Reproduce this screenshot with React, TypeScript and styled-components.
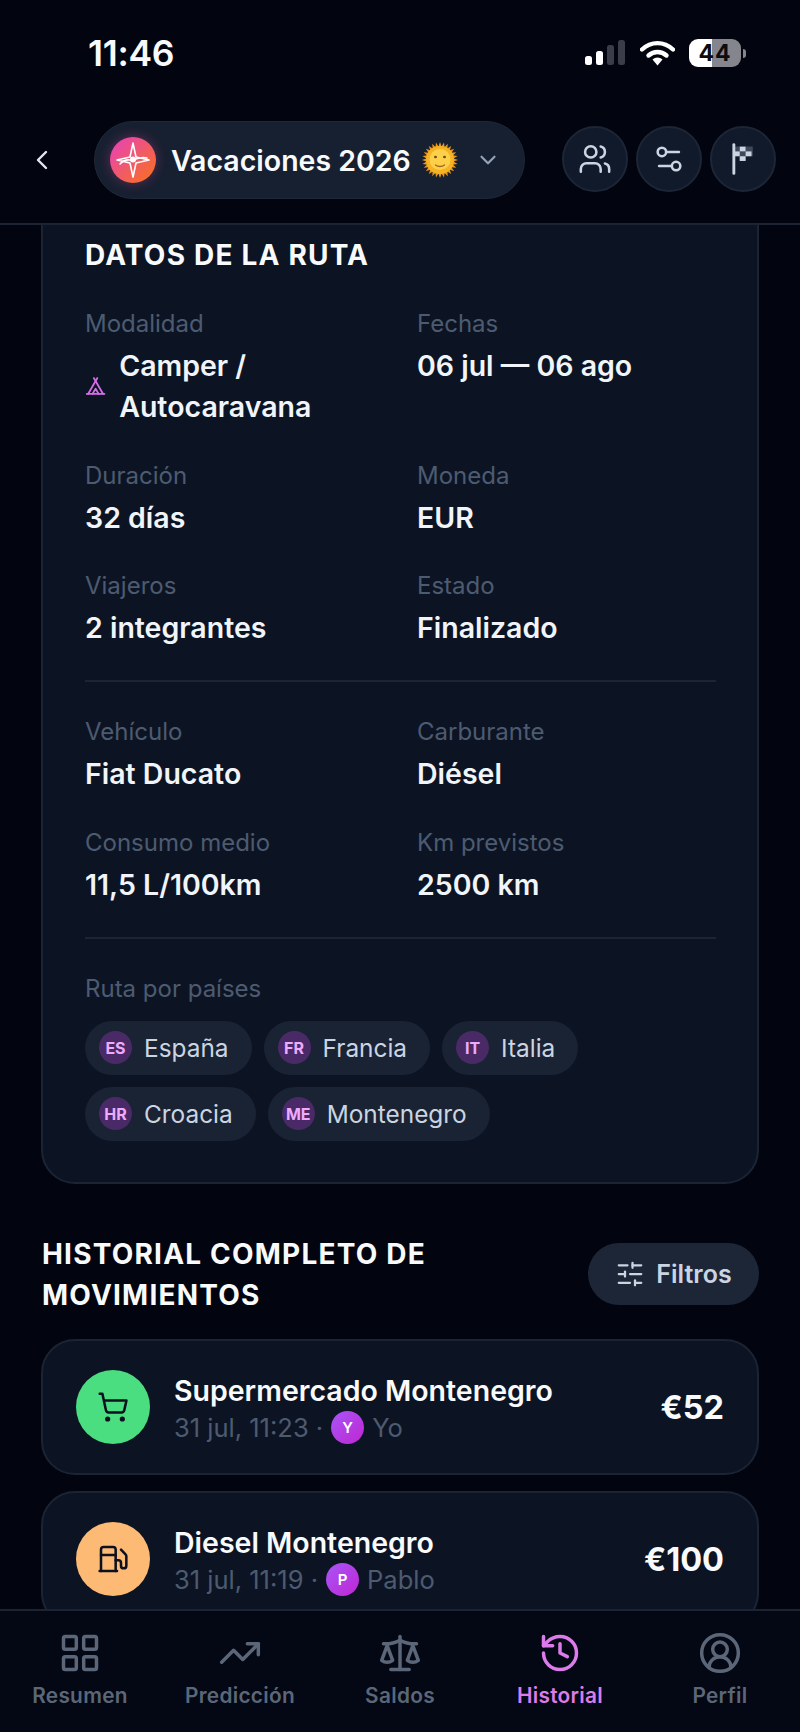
import styled, { createGlobalStyle } from "styled-components";
import {
	ChevronDown,
	ChevronLeft,
	CircleUserRound,
	Fuel,
	History,
	LayoutGrid,
	Scale,
	Settings2,
	ShoppingCart,
	SlidersHorizontal,
	Tent,
	TrendingUp,
	Users,
} from "lucide-react";

const GlobalStyle = createGlobalStyle`
	html, body {
		margin: 0;
		padding: 0;
		background: #02040f;
	}
	* {
		box-sizing: border-box;
	}
`;

const routeRows = [
	{ label: "Duración", value: "32 días" },
	{ label: "Moneda", value: "EUR" },
	{ label: "Viajeros", value: "2 integrantes" },
	{ label: "Estado", value: "Finalizado" },
];

const vehicleRows = [
	{ label: "Vehículo", value: "Fiat Ducato" },
	{ label: "Carburante", value: "Diésel" },
	{ label: "Consumo medio", value: "11,5 L/100km" },
	{ label: "Km previstos", value: "2500 km" },
];

const countries = [
	{ code: "ES", name: "España" },
	{ code: "FR", name: "Francia" },
	{ code: "IT", name: "Italia" },
	{ code: "HR", name: "Croacia" },
	{ code: "ME", name: "Montenegro" },
];

const navItems = [
	{ label: "Resumen", Icon: LayoutGrid },
	{ label: "Predicción", Icon: TrendingUp },
	{ label: "Saldos", Icon: Scale },
	{ label: "Historial", Icon: History, active: true },
	{ label: "Perfil", Icon: CircleUserRound },
];

const SignalIcon = () => (
	<svg width="41" height="26" viewBox="0 0 41 26">
		<rect x="0" y="16" width="7" height="9" rx="2.5" fill="#fff" />
		<rect x="11" y="11" width="7" height="14" rx="2.5" fill="#fff" />
		<rect x="22" y="5" width="7" height="20" rx="2.5" fill="#3b3d48" />
		<rect x="33" y="0" width="7" height="25" rx="2.5" fill="#3b3d48" />
	</svg>
);

const WifiIcon = () => (
	<svg width="35" height="26" viewBox="0 0 35 26" fill="none">
		<path d="M2 9.5C11 1 24 1 33 9.5" stroke="#fff" strokeWidth="4.4" strokeLinecap="round" />
		<path d="M8.5 15.5C13.8 10.8 21.2 10.8 26.5 15.5" stroke="#fff" strokeWidth="4.4" strokeLinecap="round" />
		<path d="M12.5 19.6C15.4 16.9 19.6 16.9 22.5 19.6L17.5 25.4Z" fill="#fff" />
	</svg>
);

const TripLogo = () => (
	<svg width="46" height="46" viewBox="0 0 46 46" fill="none">
		<path d="M23 6L26 20L39 23L26 26L23 40L20 26L7 23L20 20Z" stroke="#fff" strokeWidth="1.6" strokeLinejoin="round" />
		<path d="M10 27C16 20 20 24 23 23C27 22 31 19 37 21" stroke="#fff" strokeWidth="1.6" strokeLinecap="round" />
		<circle cx="23" cy="22.5" r="3" fill="#fff" />
	</svg>
);

const SunIcon = () => {
	const rays = Array.from({ length: 28 }, (_, i) => (i * 360) / 28);
	return (
		<svg width="36" height="36" viewBox="0 0 36 36">
			{rays.map((deg) => (
				<path key={deg} d="M16.2 5L18 0L19.8 5Z" fill="#e8951a" transform={`rotate(${deg} 18 18)`} />
			))}
			<circle cx="18" cy="18" r="14" fill="#f5b324" />
			<circle cx="18" cy="17.5" r="10.5" fill="#fdd04a" />
			<ellipse cx="13.5" cy="15" rx="1.5" ry="1.3" fill="#6d4c20" />
			<ellipse cx="22.5" cy="15" rx="1.5" ry="1.3" fill="#6d4c20" />
			<path d="M13.5 23C16 25 20 25 22.5 23" stroke="#a8651e" strokeWidth="1.3" fill="none" strokeLinecap="round" />
		</svg>
	);
};

const CheckerFlag = () => (
	<svg width="32" height="34" viewBox="0 0 24 26" fill="none">
		<path d="M5 2V24" stroke="#cbd5e1" strokeWidth="2.2" strokeLinecap="round" />
		<path d="M5 3.5H9.5V7.2H14V3.5H19.5V10.9H14V14.5H9.5V10.9H5Z" fill="#cbd5e1" opacity="0.25" />
		<rect x="9.5" y="3.5" width="4.5" height="3.7" fill="#cbd5e1" />
		<rect x="14" y="7.2" width="4.5" height="3.7" fill="#cbd5e1" />
		<rect x="9.5" y="10.9" width="4.5" height="3.6" fill="#cbd5e1" />
		<rect x="5" y="7.2" width="4.5" height="3.7" fill="#cbd5e1" />
	</svg>
);

const App = () => {
	return (
		<Phone>
			<GlobalStyle />
			<StatusBar>
				<Clock>11:46</Clock>
				<StatusIcons>
					<SignalIcon />
					<WifiIcon />
					<Battery>
						<BatteryBody>44</BatteryBody>
						<BatteryCap />
					</Battery>
				</StatusIcons>
			</StatusBar>

			<Header>
				<BackButton>
					<ChevronLeft size={32} strokeWidth={1.8} />
				</BackButton>
				<TripPill>
					<LogoBadge>
						<TripLogo />
					</LogoBadge>
					<TripName>Vacaciones 2026</TripName>
					<SunIcon />
					<PillChevron>
						<ChevronDown size={26} strokeWidth={2} />
					</PillChevron>
				</TripPill>
				<HeaderActions>
					<RoundButton>
						<Users size={34} strokeWidth={1.8} />
					</RoundButton>
					<RoundButton>
						<Settings2 size={34} strokeWidth={1.8} />
					</RoundButton>
					<RoundButton>
						<CheckerFlag />
					</RoundButton>
				</HeaderActions>
			</Header>

			<Scroll>
				<RouteCard>
					<CardTitle>DATOS DE LA RUTA</CardTitle>
					<DataGrid>
						<div>
							<FieldLabel>Modalidad</FieldLabel>
							<ModeValue>
								<Tent size={26} strokeWidth={2} color="#d56ee6" />
								<FieldValue>Camper / Autocaravana</FieldValue>
							</ModeValue>
						</div>
						<div>
							<FieldLabel>Fechas</FieldLabel>
							<FieldValue>06 jul — 06 ago</FieldValue>
						</div>
						{routeRows.map((field) => (
							<div key={field.label}>
								<FieldLabel>{field.label}</FieldLabel>
								<FieldValue>{field.value}</FieldValue>
							</div>
						))}
					</DataGrid>
					<Divider />
					<DataGrid>
						{vehicleRows.map((field) => (
							<div key={field.label}>
								<FieldLabel>{field.label}</FieldLabel>
								<FieldValue>{field.value}</FieldValue>
							</div>
						))}
					</DataGrid>
					<Divider />
					<FieldLabel>Ruta por países</FieldLabel>
					<Chips>
						{countries.map((country) => (
							<Chip key={country.code}>
								<ChipCode>{country.code}</ChipCode>
								{country.name}
							</Chip>
						))}
					</Chips>
				</RouteCard>

				<SectionHeader>
					<SectionTitle>HISTORIAL COMPLETO DE MOVIMIENTOS</SectionTitle>
					<FilterButton>
						<SlidersHorizontal size={30} strokeWidth={1.8} />
						Filtros
					</FilterButton>
				</SectionHeader>

				<Movements>
					<Movement>
						<MovementIcon $bg="#4ade80">
							<ShoppingCart size={32} strokeWidth={1.9} />
						</MovementIcon>
						<MovementBody>
							<MovementTitle>Supermercado Montenegro</MovementTitle>
							<MovementMeta>
								{"31 jul, 11:23 ·"}
								<Avatar>Y</Avatar>
								{"Yo"}
							</MovementMeta>
						</MovementBody>
						<Amount>€52</Amount>
					</Movement>
					<Movement>
						<MovementIcon $bg="#fdba74">
							<Fuel size={32} strokeWidth={1.9} />
						</MovementIcon>
						<MovementBody>
							<MovementTitle>Diesel Montenegro</MovementTitle>
							<MovementMeta>
								{"31 jul, 11:19 ·"}
								<Avatar>P</Avatar>
								{"Pablo"}
							</MovementMeta>
						</MovementBody>
						<Amount>€100</Amount>
					</Movement>
				</Movements>
			</Scroll>

			<BottomNav>
				{navItems.map(({ label, Icon, active }) => (
					<NavItem key={label} $active={!!active}>
						<Icon size={44} strokeWidth={1.9} />
						<span>{label}</span>
					</NavItem>
				))}
			</BottomNav>
		</Phone>
	);
};

export default App;

const Phone = styled.div`
	width: 800px;
	height: 1732px;
	display: flex;
	flex-direction: column;
	overflow: hidden;
	background: #02040f;
	color: #f8fafc;
	font-family: Inter, "Liberation Sans", sans-serif;
`;

const StatusBar = styled.div`
	height: 106px;
	flex: none;
	display: flex;
	align-items: center;
	justify-content: space-between;
	padding: 0 54px 0 88px;
`;

const Clock = styled.div`
	font-size: 35.5px;
	font-weight: 600;
	letter-spacing: -0.3px;
`;

const StatusIcons = styled.div`
	display: flex;
	align-items: center;
	gap: 14px;
`;

const Battery = styled.div`
	display: flex;
	align-items: center;
	gap: 2px;
`;

const BatteryBody = styled.div`
	width: 52px;
	height: 28px;
	border-radius: 9px;
	background: linear-gradient(90deg, #fff 45%, #85858d 45%);
	color: #0b0b10;
	font-size: 23px;
	font-weight: 700;
	line-height: 28px;
	letter-spacing: 1px;
	text-align: center;
`;

const BatteryCap = styled.div`
	width: 3px;
	height: 9px;
	border-radius: 0 3px 3px 0;
	background: #85858d;
`;

const Header = styled.header`
	flex: none;
	height: 119px;
	display: flex;
	align-items: flex-start;
	padding: 15px 24px 0 26px;
	border-bottom: 2px solid #1c2433;
	background: #02040f;
`;

const BackButton = styled.div`
	width: 32px;
	height: 78px;
	margin-right: 36px;
	display: flex;
	align-items: center;
	justify-content: center;
	color: #e2e8f0;
`;

const TripPill = styled.div`
	width: 431px;
	height: 78px;
	display: flex;
	align-items: center;
	padding-left: 15px;
	border-radius: 39px;
	border: 1px solid #1f2838;
	background: #172031;
`;

const LogoBadge = styled.div`
	width: 46px;
	height: 46px;
	flex: none;
	margin-right: 15px;
	border-radius: 50%;
	background: linear-gradient(135deg, #e83fc0 0%, #f97316 100%);
	box-shadow: 0 0 12px rgba(236, 72, 153, 0.35);
`;

const TripName = styled.div`
	margin-right: 11px;
	font-size: 28.5px;
	font-weight: 600;
	white-space: nowrap;
`;

const PillChevron = styled.div`
	margin-left: 17px;
	display: flex;
	color: #94a3b8;
`;

const HeaderActions = styled.div`
	margin-left: auto;
	margin-top: 5px;
	display: flex;
	gap: 8px;
`;

const RoundButton = styled.div`
	width: 66px;
	height: 66px;
	display: flex;
	align-items: center;
	justify-content: center;
	border-radius: 50%;
	border: 2px solid #1d2636;
	background: #111a2b;
	color: #cbd5e1;
`;

const Scroll = styled.main`
	flex: 1;
	min-height: 0;
	overflow: hidden;
	padding: 0 41px;
`;

const RouteCard = styled.section`
	margin-top: -34px;
	padding: 44px 41px 41px 42px;
	border: 2px solid #1b2434;
	border-radius: 34px;
	background: #0c1424;
`;

const CardTitle = styled.h2`
	margin: 0 0 33px;
	font-size: 28px;
	font-weight: 700;
	line-height: 36px;
	letter-spacing: 1.2px;
`;

const DataGrid = styled.div`
	display: grid;
	grid-template-columns: 300px 300px;
	column-gap: 32px;
	row-gap: 30.5px;
`;

const FieldLabel = styled.div`
	margin-bottom: 3px;
	color: #4d5b70;
	font-size: 24px;
	line-height: 36px;
`;

const FieldValue = styled.div`
	color: #f1f5f9;
	font-size: 28.5px;
	font-weight: 600;
	line-height: 41px;
`;

const ModeValue = styled.div`
	display: flex;
	align-items: center;
	gap: 13px;
`;

const Divider = styled.div`
	height: 2px;
	margin: 32px 0 32px;
	background: #1c2534;
`;

const Chips = styled.div`
	display: flex;
	flex-wrap: wrap;
	gap: 12px;
	margin-top: 14px;
`;

const Chip = styled.div`
	height: 54px;
	display: flex;
	align-items: center;
	gap: 12px;
	padding: 0 23px 0 14px;
	border-radius: 27px;
	background: #1a2333;
	color: #cbd5e1;
	font-size: 24.4px;
`;

const ChipCode = styled.span`
	width: 33px;
	height: 33px;
	display: flex;
	align-items: center;
	justify-content: center;
	border-radius: 50%;
	background: #4a2a66;
	color: #eeaaff;
	font-size: 16px;
	font-weight: 700;
`;

const SectionHeader = styled.div`
	display: flex;
	align-items: center;
	justify-content: space-between;
	margin: 50px 0 23px;
	padding-left: 1px;
`;

const SectionTitle = styled.h2`
	width: 440px;
	margin: 0;
	font-size: 28px;
	font-weight: 700;
	line-height: 41px;
	letter-spacing: 1.2px;
`;

const FilterButton = styled.div`
	width: 171px;
	height: 62px;
	margin-top: -2px;
	display: flex;
	align-items: center;
	justify-content: center;
	gap: 11px;
	border-radius: 31px;
	background: #1c2637;
	color: #cbd5e1;
	font-size: 25px;
	font-weight: 600;
`;

const Movements = styled.div`
	display: flex;
	flex-direction: column;
	gap: 16px;
`;

const Movement = styled.article`
	height: 136px;
	flex: none;
	display: flex;
	align-items: center;
	gap: 24px;
	padding: 0 33px;
	border: 2px solid #1b2434;
	border-radius: 34px;
	background: #0c1424;
`;

const MovementIcon = styled.div<{ $bg: string }>`
	width: 74px;
	height: 74px;
	flex: none;
	display: flex;
	align-items: center;
	justify-content: center;
	border-radius: 50%;
	background: ${(p) => p.$bg};
	color: #0b1120;
`;

const MovementBody = styled.div`
	flex: 1;
	min-width: 0;
	padding-top: 4px;
`;

const MovementTitle = styled.div`
	margin-bottom: 2px;
	color: #f8fafc;
	font-size: 28.5px;
	font-weight: 600;
	line-height: 36px;
`;

const MovementMeta = styled.div`
	display: flex;
	align-items: center;
	gap: 8px;
	color: #4d5b70;
	font-size: 25.5px;
	line-height: 34px;
`;

const Avatar = styled.span`
	width: 33px;
	height: 33px;
	display: flex;
	align-items: center;
	justify-content: center;
	border-radius: 50%;
	background: linear-gradient(135deg, #a855f7, #c026d3);
	color: #fff;
	font-size: 15px;
	font-weight: 600;
`;

const Amount = styled.div`
	padding-top: 2px;
	font-size: 32.5px;
	font-weight: 700;
`;

const BottomNav = styled.nav`
	flex: none;
	height: 123px;
	display: grid;
	grid-template-columns: repeat(5, 160px);
	border-top: 2px solid #1c2433;
	background: #040714;
`;

const NavItem = styled.div<{ $active: boolean }>`
	display: flex;
	flex-direction: column;
	align-items: center;
	gap: 7px;
	padding-top: 20px;
	color: ${(p) => (p.$active ? "#dc7bea" : "#5b6778")};
	font-size: 20.8px;
	font-weight: 600;
	letter-spacing: 0.3px;
	line-height: 28px;
`;
